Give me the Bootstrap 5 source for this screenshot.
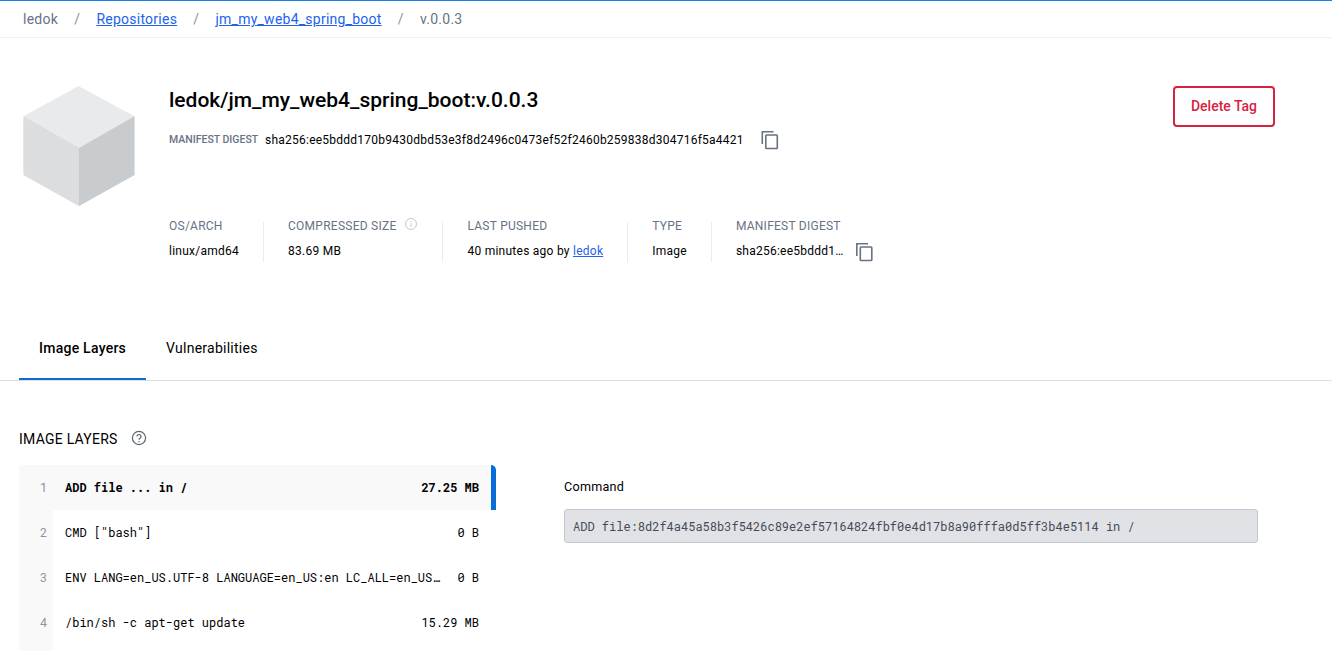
<!DOCTYPE html>
<html lang="en">
<head>
<meta charset="utf-8">
<meta name="viewport" content="width=device-width, initial-scale=1">
<title>ledok/jm_my_web4_spring_boot:v.0.0.3</title>
<link href="https://cdn.jsdelivr.net/npm/bootstrap@5.3.0/dist/css/bootstrap.min.css" rel="stylesheet">
<style>
  html, body { height: 100%; overflow: hidden; }
  body { font-family: Roboto, "Liberation Sans", sans-serif; font-size: 12px; line-height: 18px; letter-spacing: .25px; color: #000; background: #fff; }
  a { color: #1d63ed; }
  .crumb-bar { height: 38px; border-top: 1px solid #1d7fe8; border-bottom: 1px solid #efefef; padding-left: 23px; font-size: 14px; color: #677285; }
  .crumb-bar .breadcrumb { --bs-breadcrumb-item-padding-x: 16.150px; --bs-breadcrumb-divider-color: #8b93a1; --bs-breadcrumb-item-active-color: #677285; --bs-breadcrumb-font-size: 14px; }
  .tag-head { height: 278px; padding: 48px 57px 0 23px; }
  .cube { width: 112px; height: 120px; margin-right: 34px; }
  h1 { font-size: 21px; line-height: 28px; font-weight: 500; letter-spacing: 0; }
  .digest { height: 20px; margin-top: 16px; }
  .digest-label { font-size: 10.500px; font-weight: 500; letter-spacing: 0; color: #677285; width: 96px; }
  .digest-value { width: 496px; letter-spacing: .24px; }
  .facts { margin-top: 72px; }
  .fact { height: 40px; padding-right: 24px; margin-right: 24px; border-right: 1px solid #ececec; white-space: nowrap; }
  .fact:last-child { border: 0; }
  .fact-label { color: #677285; height: 18px; line-height: 18px; margin-top: -5px; }
  .fact-value { height: 18px; margin-top: 7px; }
  .copy-gap { margin-left: 12px; }
  .btn-delete { --bs-btn-color: #d5233f; --bs-btn-border-color: #d5233f; --bs-btn-hover-bg: #d5233f; --bs-btn-hover-color: #fff; border-width: 2px; border-radius: 4px; width: 102px; height: 41px; padding: 0; font-size: 14px; font-weight: 500; letter-spacing: 0; }
  .tab-bar { height: 65px; padding-left: 19px; border-bottom: 1px solid #dedfe1; font-size: 14px; }
  .tab-bar .nav-link { color: #000; padding: 22px 20px 0; height: 64px; line-height: 20px; border-bottom: 2px solid transparent; }
  .tab-bar .nav-link.active { font-weight: 500; border-color: #086dd7; }
  .layers-area { padding: 48px 74px 0 19px; }
  h2 { font-size: 14px; line-height: 20px; font-weight: 400; }
  .help { margin: -2px 0 0 13px; }
  .mono { font-family: "Roboto Mono", "DejaVu Sans Mono", monospace; letter-spacing: 0; }
  .layer-list { width: 477px; margin-right: 68px; flex: none; }
  .layer-rows { margin-top: 16px; }
  .layer { height: 45px; padding: 0 17px 2px 0; background: linear-gradient(90deg, #f9f9f9 34px, #fff 34px); }
  .layer.selected { background: #f9f9f9; border-right: 5px solid #086dd7; border-top-right-radius: 5px; padding-right: 12px; font-weight: 700; }
  .layer.partial { height: 6px; padding: 0; }
  .layer-no { width: 46px; padding-left: 21px; font-weight: 400; color: #8b93a1; flex: none; }
  .layer-cmd { width: 377px; }
  .command-box { height: 34px; margin-top: 13px; padding-left: 8px; background: #e1e2e6; border: 1px solid #c4c8d1; border-radius: 3px; color: #444b57; }
  .command-panel { padding-top: 49px; }
  .command-title { font-size: 12.600px; }
</style>
</head>
<body>
<nav class="crumb-bar d-flex align-items-center" aria-label="breadcrumb">
  <ol class="breadcrumb mb-0">
    <li class="breadcrumb-item">ledok</li>
    <li class="breadcrumb-item"><a href="#">Repositories</a></li>
    <li class="breadcrumb-item"><a href="#">jm_my_web4_spring_boot</a></li>
    <li class="breadcrumb-item active" aria-current="page">v.0.0.3</li>
  </ol>
</nav>

<header class="tag-head d-flex align-items-start">
  <svg class="cube flex-shrink-0" viewBox="0 0 112 120" aria-hidden="true">
    <path fill="#e8eaeb" d="M55.500 0 111.500 30.300V89L56 120 .5 89V30.300z"/>
    <path fill="#dcddde" d="M.5 30.300 56 62v58L.5 89z"/>
    <path fill="#c9cccf" d="M111.500 30.300 56 62v58l55.500-31z"/>
  </svg>
  <div class="flex-grow-1">
    <h1 class="mb-0">ledok/jm_my_web4_spring_boot:v.0.0.3</h1>
    <div class="digest d-flex align-items-center">
      <span class="digest-label">MANIFEST DIGEST</span>
      <span class="digest-value">sha256:ee5bddd170b9430dbd53e3f8d2496c0473ef52f2460b259838d304716f5a4421</span>
      <svg width="18" height="20" viewBox="0 0 18 20" fill="none" stroke="#677285" stroke-width="1.600"><path d="M1.300 14V1.800h11.200"/><rect x="4.800" y="5" width="11.500" height="13.500" rx=".7"/></svg>
    </div>
    <div class="facts d-flex">
      <div class="fact"><div class="fact-label">OS/ARCH</div><div class="fact-value">linux/amd64</div></div>
      <div class="fact">
        <div class="fact-label d-flex">COMPRESSED SIZE
          <svg class="ms-2" width="14" height="14" viewBox="0 0 14 14" fill="none" stroke="#c8c8c8"><circle cx="7" cy="7" r="5.500"/><path d="M7 6.200v3.600M7 4v1.200"/></svg>
        </div>
        <div class="fact-value">83.69 MB</div>
      </div>
      <div class="fact"><div class="fact-label">LAST PUSHED</div><div class="fact-value">40 minutes ago by <a href="#">ledok</a></div></div>
      <div class="fact"><div class="fact-label">TYPE</div><div class="fact-value">Image</div></div>
      <div class="fact">
        <div class="fact-label">MANIFEST DIGEST</div>
        <div class="fact-value d-flex">sha256:ee5bddd1…
          <svg class="copy-gap" width="18" height="20" viewBox="0 0 18 20" fill="none" stroke="#677285" stroke-width="1.600"><path d="M.8 14V1.800H12"/><rect x="4.300" y="5" width="11.500" height="13.500" rx=".7"/></svg>
        </div>
      </div>
    </div>
  </div>
  <button class="btn btn-outline-danger btn-delete" type="button">Delete Tag</button>
</header>

<nav class="tab-bar nav">
  <a class="nav-link active" href="#">Image Layers</a>
  <a class="nav-link" href="#">Vulnerabilities</a>
</nav>

<main class="layers-area d-flex">
  <section class="layer-list">
    <h2 class="mb-0 d-flex align-items-center">IMAGE LAYERS
      <svg class="help" width="16" height="16" viewBox="0 0 16 16" fill="none" stroke="#5b6474" stroke-width="1.200"><circle cx="8" cy="8" r="6.600"/><path d="M6 6.500a2 2 0 1 1 3.200 1.600C8.400 8.700 8 8.900 8 9.800M8 10.900v1.300"/></svg>
    </h2>
    <div class="mono layer-rows">
      <div class="layer selected d-flex align-items-center"><span class="layer-no">1</span><span class="layer-cmd text-truncate">ADD file ... in /</span><span class="ms-auto text-nowrap">27.25 MB</span></div>
      <div class="layer d-flex align-items-center"><span class="layer-no">2</span><span class="layer-cmd text-truncate">CMD ["bash"]</span><span class="ms-auto text-nowrap">0 B</span></div>
      <div class="layer d-flex align-items-center"><span class="layer-no">3</span><span class="layer-cmd text-truncate">ENV LANG=en_US.UTF-8 LANGUAGE=en_US:en LC_ALL=en_US…</span><span class="ms-auto text-nowrap">0 B</span></div>
      <div class="layer d-flex align-items-center"><span class="layer-no">4</span><span class="layer-cmd text-truncate">/bin/sh -c apt-get update</span><span class="ms-auto text-nowrap">15.29 MB</span></div>
      <div class="layer partial"></div>
    </div>
  </section>
  <section class="command-panel flex-grow-1">
    <div class="command-title">Command</div>
    <div class="command-box mono d-flex align-items-center">ADD file:8d2f4a45a58b3f5426c89e2ef57164824fbf0e4d17b8a90fffa0d5ff3b4e5114 in /</div>
  </section>
</main>
<script src="https://cdn.jsdelivr.net/npm/bootstrap@5.3.0/dist/js/bootstrap.bundle.min.js"></script>
</body>
</html>
